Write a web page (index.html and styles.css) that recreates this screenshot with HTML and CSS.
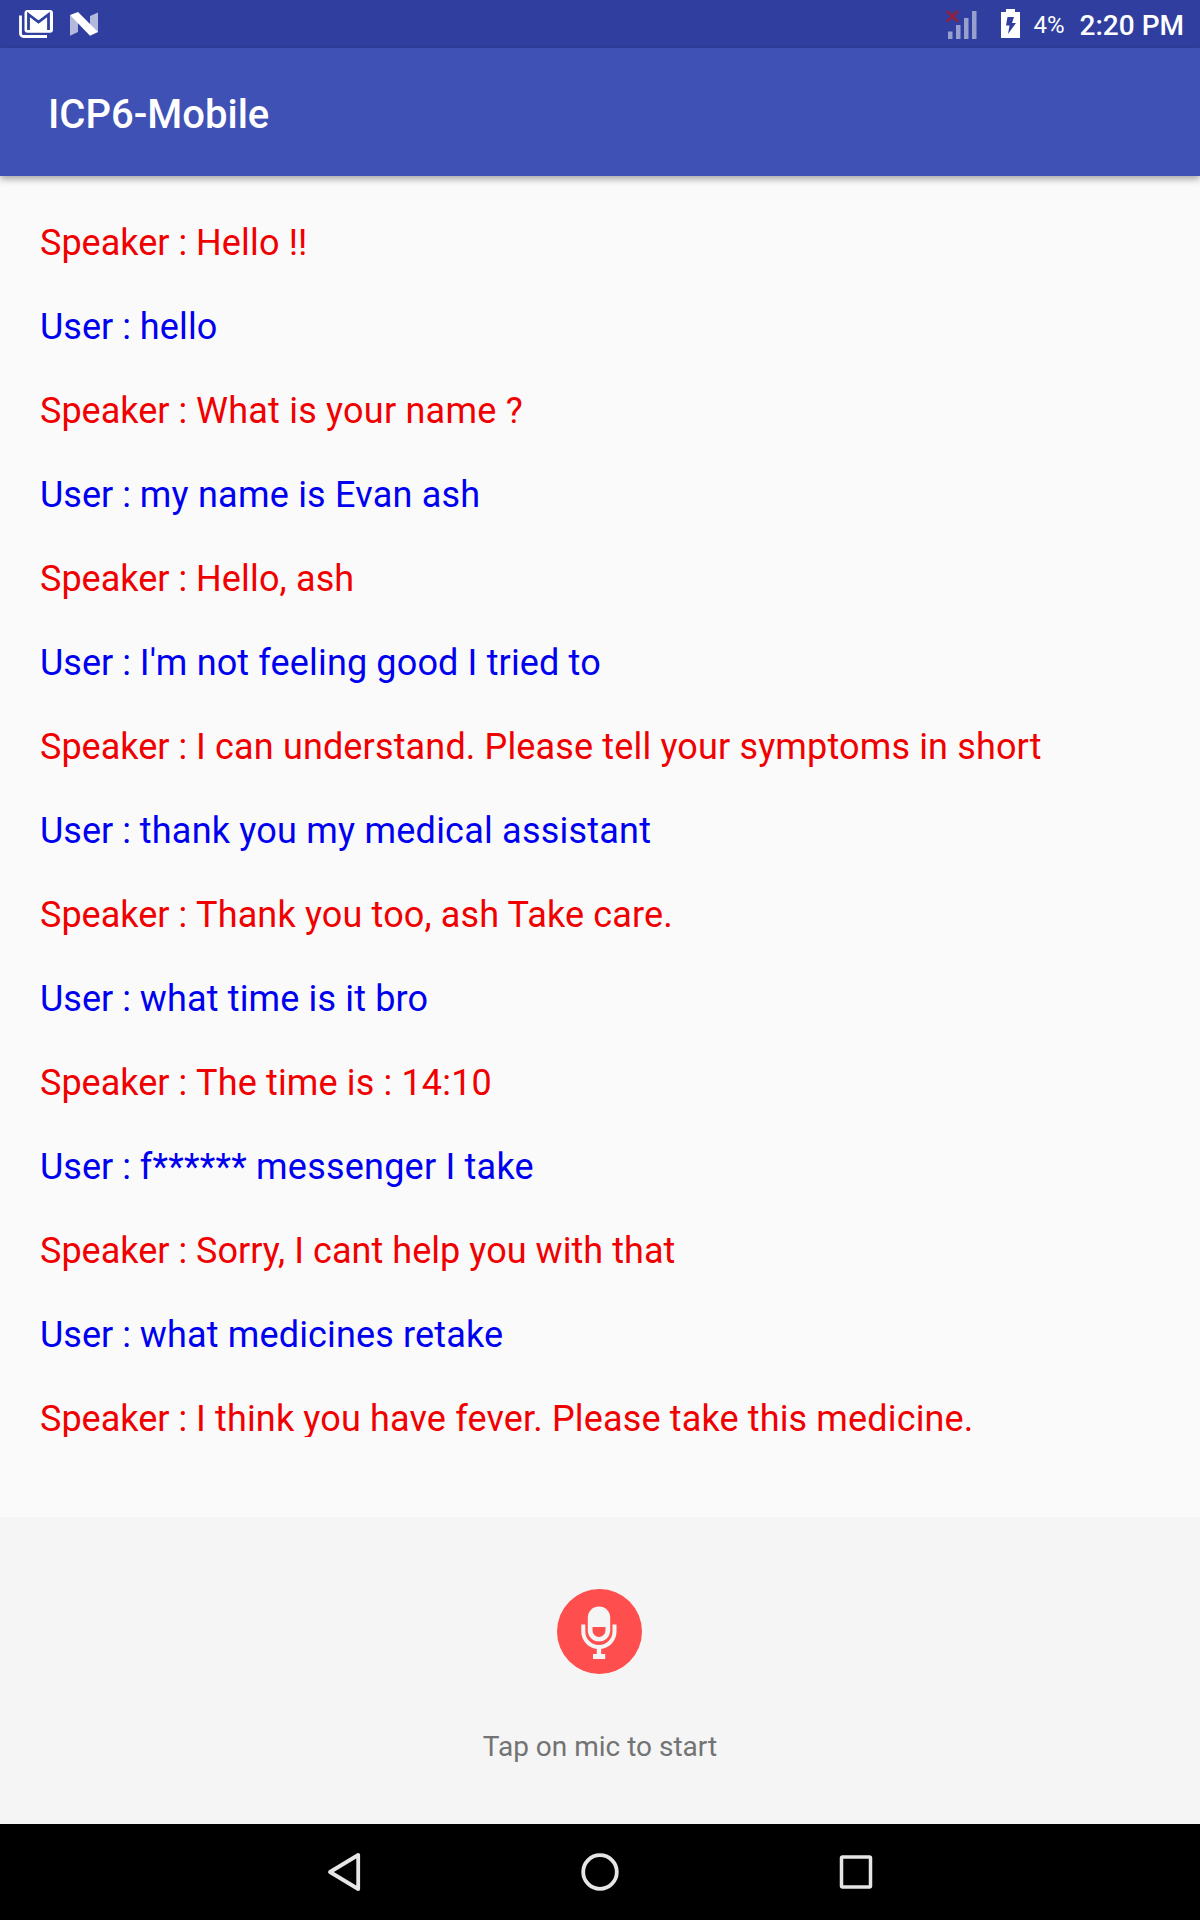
FILE: index.html
```html
<!DOCTYPE html>
<html lang="en">
<head>
<meta charset="utf-8">
<title>ICP6-Mobile</title>
<link rel="stylesheet" href="styles.css">
</head>
<body>
<header class="status">
  <svg class="icon-mail" width="34" height="28" viewBox="0 0 34 28">
    <path d="M1.500 5.500v18a3 3 0 0 0 3 3H28" fill="none" stroke="#fff" stroke-width="2.800"/>
    <rect x="5.500" y="0" width="28.500" height="22.800" rx="3" fill="#fff"/>
    <path d="M9.500 20V4.500l10 7.500 10-7.500V20" fill="none" stroke="#303f9f" stroke-width="2.800"/>
  </svg>
  <svg class="icon-n" width="28" height="24" viewBox="0 0 28 24">
    <path d="M0 3l8 5v12l-8 3.700zM28 .5v20l-8-5V4z" fill="#b3b9dc"/>
    <path d="M0 3l8-3 20 20-8 3.800z" fill="#fff"/>
  </svg>
  <svg class="icon-signal" width="31" height="29" viewBox="0 0 31 29">
    <path d="M2 21.500h4.500V29H2zM10 15h4.500v14H10zM18 8h4.500v21H18zM26 1h4.500v28H26z" fill="#979fcf"/>
    <path d="M1 1l11 10.500M12 1L1 11.500" stroke="#8f2340" stroke-width="2.800"/>
  </svg>
  <svg class="icon-battery" width="19" height="29" viewBox="0 0 19 29">
    <path d="M5 0h9v3h5v26H0V3h5z" fill="#fff"/>
    <path d="M6.500 8h6.500l-2 6h4L7 25l1.500-8.500H5z" fill="#303f9f"/>
  </svg>
  <span class="battery-level">4%</span>
  <time class="clock">2:20 PM</time>
</header>
<h1 class="app-bar">ICP6-Mobile</h1>
<main class="chat">
  <div class="messages">
    <p class="speaker">Speaker : <span>Hello !!</span></p>
    <p class="user">User : <span>hello</span></p>
    <p class="speaker">Speaker : <span class="wide">What is your name ?</span></p>
    <p class="user">User : <span class="wide">my name is Evan ash</span></p>
    <p class="speaker">Speaker : <span>Hello, ash</span></p>
    <p class="user">User : <span>I'm not feeling good I tried to</span></p>
    <p class="speaker">Speaker : <span>I can understand. Please tell your symptoms in short</span></p>
    <p class="user">User : <span class="wide">thank you my medical assistant</span></p>
    <p class="speaker">Speaker : <span>Thank you too, ash Take care.</span></p>
    <p class="user">User : <span>what time is it bro</span></p>
    <p class="speaker">Speaker : <span>The time is : 14:10</span></p>
    <p class="user">User : <span class="wide">f****** messenger I take</span></p>
    <p class="speaker">Speaker : <span class="narrow">Sorry, I cant help you with that</span></p>
    <p class="user">User : <span>what medicines retake</span></p>
    <p class="speaker">Speaker : <span>I think you have fever. Please take this medicine.</span></p>
  </div>
</main>
<section class="voice">
  <svg class="mic" width="85" height="85" viewBox="0 0 85 85">
    <circle cx="42.500" cy="42.500" r="42.500" fill="#ff4e4e"/>
    <rect x="30.800" y="17.500" width="22.400" height="35" rx="11.200" fill="#f5f5f5"/>
    <path d="M35.500 38h13v3.500a6.500 6.500 0 0 1-13 0z" fill="#ff4e4e"/>
    <path d="M26.300 35.500v7a15.600 15.600 0 0 0 31.200 0v-7" fill="none" stroke="#f5f5f5" stroke-width="4"/>
    <path d="M39.800 57h4.400v8h4v5H36v-5h3.800z" fill="#f5f5f5"/>
  </svg>
  <p class="hint">Tap on mic to start</p>
</section>
<nav class="nav">
  <svg width="256" height="96" viewBox="0 0 256 96"><path d="M142.200 31v34L114 48z" fill="none" stroke="#e6e6e6" stroke-width="3.800" stroke-linejoin="round"/></svg>
  <svg width="256" height="96" viewBox="0 0 256 96"><circle cx="128" cy="48" r="16.800" fill="none" stroke="#e6e6e6" stroke-width="3.800"/></svg>
  <svg width="256" height="96" viewBox="0 0 256 96"><rect x="113.500" y="33" width="29" height="30" rx="1" fill="none" stroke="#e6e6e6" stroke-width="3.500"/></svg>
</nav>
</body>
</html>
```
FILE: styles.css
```css
* { box-sizing: border-box; }
body { margin: 0; width: 1200px; height: 1920px; display: flex; flex-direction: column; font-family: Roboto, sans-serif; background: #fafafa; }
svg { display: block; flex: none; }
.status { height: 48px; padding: 0 16px 0 19px; display: flex; align-items: center; color: #fff; background: #303f9f; }
.icon-n { margin-left: 17px; }
.icon-signal { margin-left: auto; margin-top: 1px; }
.icon-battery { margin-left: 24px; margin-bottom: 1px; }
.battery-level { margin: 3px 0 0 13px; font-size: 24px; line-height: 45px; }
.clock { margin: 3px 0 0 15px; font-size: 28px; font-weight: 500; line-height: 45px; }
.app-bar { margin: 0; height: 128px; padding-left: 48px; line-height: 134px; font-size: 40px; font-weight: 500; color: #fff; background: #3f51b5; box-shadow: 0 3px 7px rgba(0, 0, 0, .35); }
.chat { height: 1341px; padding: 25px 40px 80px; }
.messages { height: 1236px; overflow: hidden; }
.messages p { margin: 0; height: 84px; line-height: 84px; font-size: 36px; white-space: nowrap; }
.messages span { letter-spacing: .15px; }
.messages .wide { letter-spacing: .22px; }
.messages .narrow { letter-spacing: .05px; }
.speaker { color: #f00000; }
.user { color: #0000f0; }
.voice { height: 307px; padding-top: 72px; display: flex; flex-direction: column; align-items: center; background: #f5f5f5; }
.mic { margin-right: 1px; }
.hint { margin: 56px 0 0; font-size: 28px; line-height: 33px; color: #737373; }
.nav { height: 96px; display: flex; justify-content: center; background: #000; }
```
